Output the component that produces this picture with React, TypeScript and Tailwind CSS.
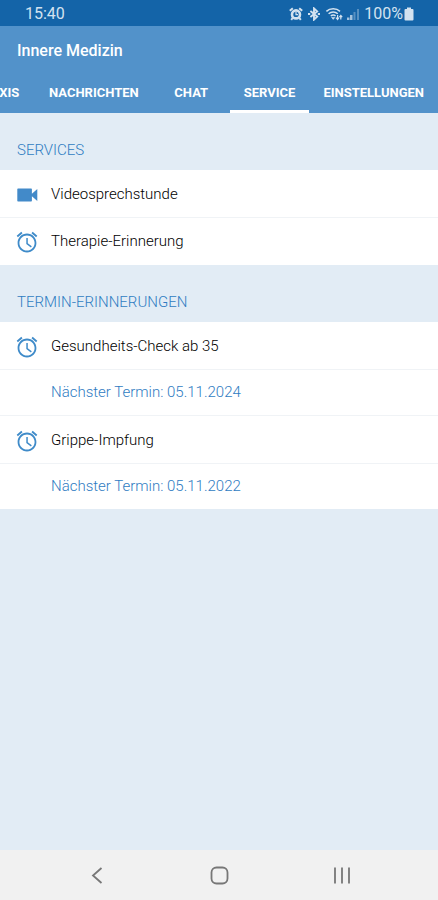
import { useState } from "react";
import clsx from "clsx";

const tabs = ["PRAXIS", "NACHRICHTEN", "CHAT", "SERVICE", "EINSTELLUNGEN"];

const reminders = [
    { name: "Gesundheits-Check ab 35", next: "05.11.2024" },
    { name: "Grippe-Impfung", next: "05.11.2022" },
];

function AlarmIcon() {
    return (
        <svg viewBox="0 0 24 24" className="size-6 shrink-0" fill="#3f8bc9" aria-hidden="true">
            <path d="M22.300 5.720l-4.600-3.860-1.200 1.500 4.600 3.860zM7.500 3.360L6.300 1.860 1.700 5.710l1.200 1.510zM11.300 8v6l4.600 3.400.9-1.200-4-3V8zM12 3.600c-5.200 0-9.400 4.200-9.400 9.400s4.200 9.400 9.400 9.400 9.400-4.200 9.400-9.400-4.200-9.400-9.400-9.400zm0 17c-4.200 0-7.600-3.400-7.600-7.600s3.400-7.600 7.600-7.600 7.600 3.400 7.600 7.600-3.400 7.600-7.600 7.600z" />
        </svg>
    );
}

function VideoIcon() {
    return (
        <svg viewBox="0 0 24 24" className="size-6 shrink-0" fill="#428ac9" aria-hidden="true">
            <path d="M3 5.500h13.200a.7.7 0 0 1 .7.7v4.500l5.400-4.700v12l-5.400-4.700v4.500a.7.7 0 0 1-.7.7H3a.7.7 0 0 1-.7-.7V6.200a.7.7 0 0 1 .7-.7z" />
        </svg>
    );
}

function StatusBar() {
    return (
        <div className="flex h-[26px] items-center justify-between bg-[#1464a8] pt-0.5 pr-6 pl-[25px] text-[#d3e2f0]">
            <span className="text-base leading-6">15:40</span>
            <div className="flex items-center gap-1">
                <svg viewBox="0 0 14 14" className="size-[14px]" fill="none" stroke="currentColor" aria-hidden="true">
                    <circle cx="7" cy="7.4" r="4" strokeWidth="2.6" />
                    <path d="M.8 3.800L3.800 1.200M13.200 3.800L10.200 1.200M3.600 11L2.200 12.800M10.400 11L11.800 12.800" strokeWidth="2" />
                    <path d="M7 5v2.600h2" strokeWidth="1.200" />
                </svg>
                <svg viewBox="0 0 14 14" className="size-[14px]" fill="none" stroke="currentColor" aria-hidden="true">
                    <path d="M3.400 4L10.200 9.600L7 12.600V1.400L10.200 4.400L3.400 10" strokeWidth="1.900" />
                    <path d="M1 7h2.200M10.800 7H13" strokeWidth="1.900" />
                </svg>
                <svg viewBox="0 0 18 14" className="h-[14px] w-[18px]" fill="none" stroke="currentColor" aria-hidden="true">
                    <path d="M1.400 4.400C5 .8 11.400 .8 15 4.400M3.600 6.800C6.200 4.400 10.200 4.400 12.800 6.800M5.800 9C7.200 7.800 9.200 7.800 10.600 9" strokeWidth="1.500" />
                    <path d="M8.200 12.400L6.600 10.400H9.800z" fill="currentColor" strokeWidth=".6" />
                    <path d="M12.600 8v4.200M11 10.600l1.600 1.800 1.200-1.800M15.800 12.600V8.600M14.400 10.200l1.400-1.800L17.200 10.200" strokeWidth="1.200" />
                </svg>
                <svg viewBox="0 0 12 14" className="h-[14px] w-3" fill="currentColor" aria-hidden="true">
                    <path d="M0 10.500h2.500V13H0zM3 8h2.500v5H3z" opacity=".75" />
                    <path d="M6.500 5h2v8h-2zM10 2h2v11h-2z" opacity=".35" />
                </svg>
                <div className="flex items-center gap-px pl-px">
                    <span className="text-base leading-6">100%</span>
                    <svg viewBox="0 0 10 14" className="h-[14px] w-[10px]" fill="currentColor" aria-hidden="true">
                        <path d="M3 .5h4V2h1.500a1 1 0 0 1 1 1v9.500a1 1 0 0 1-1 1h-7a1 1 0 0 1-1-1V3a1 1 0 0 1 1-1H3z" />
                    </svg>
                </div>
            </div>
        </div>
    );
}

function SectionTitle({ children }: { children: string }) {
    return <h2 className="px-[17px] pt-[27px] pb-[10px] text-[15px] leading-5 font-light text-[#2f7cc2]">{children}</h2>;
}

function App() {
    const [active, setActive] = useState("SERVICE");

    return (
        <div className="flex min-h-screen flex-col bg-[#e2ecf5] font-[Roboto,sans-serif]">
            <StatusBar />

            <header className="bg-[#5292ca] text-white">
                <h1 className="px-[17px] pt-[13px] pb-[9px] text-base leading-6 font-medium">Innere Medizin</h1>
                <nav className="flex h-[41px] justify-end overflow-hidden">
                    {tabs.map((tab) => (
                        <button
                            key={tab}
                            type="button"
                            onClick={() => setActive(tab)}
                            className={clsx(
                                "min-w-[77px] shrink-0 border-b-3 px-3.5 pt-1 text-[13px] font-bold",
                                active === tab ? "border-white" : "border-transparent"
                            )}
                        >
                            {tab}
                        </button>
                    ))}
                </nav>
            </header>

            <main className="grow">
                <section>
                    <SectionTitle>SERVICES</SectionTitle>
                    <div className="divide-y divide-[#f0f3f6] bg-white text-[15px] font-light text-black">
                        <button type="button" className="flex h-12 w-full items-center gap-3 px-[15px] pt-0.5">
                            <VideoIcon />
                            Videosprechstunde
                        </button>
                        <button type="button" className="flex h-[47px] w-full items-center gap-3 px-[15px]">
                            <AlarmIcon />
                            Therapie-Erinnerung
                        </button>
                    </div>
                </section>

                <section>
                    <SectionTitle>TERMIN-ERINNERUNGEN</SectionTitle>
                    <div className="divide-y divide-[#f0f3f6] bg-white text-[15px] font-light text-black">
                        {reminders.map((r) => (
                            <div key={r.name} className="divide-y divide-[#f0f3f6]">
                                <button type="button" className="flex h-12 w-full items-center gap-3 px-[15px] pt-0.5">
                                    <AlarmIcon />
                                    {r.name}
                                </button>
                                <p className="flex h-[45px] items-center pl-[51px] text-[#2f7cc2]">Nächster Termin: {r.next}</p>
                            </div>
                        ))}
                    </div>
                </section>
            </main>

            <footer className="flex h-[50px] bg-[#f1f1f1] px-9 text-[#777777]">
                <button type="button" aria-label="Zurück" className="flex flex-1 items-center justify-center">
                    <svg viewBox="0 0 20 20" className="size-5" fill="none" stroke="currentColor" strokeWidth="1.800">
                        <path d="M14.500 3L6 10.500L14.500 18" />
                    </svg>
                </button>
                <button type="button" aria-label="Startseite" className="flex flex-1 items-center justify-center">
                    <svg viewBox="0 0 20 20" className="size-5" fill="none" stroke="currentColor" strokeWidth="1.800">
                        <rect x="2.500" y="2.500" width="16" height="16" rx="5" />
                    </svg>
                </button>
                <button type="button" aria-label="Letzte Apps" className="flex flex-1 items-center justify-center">
                    <svg viewBox="0 0 20 20" className="size-5" fill="none" stroke="currentColor" strokeWidth="1.800">
                        <path d="M4 2.500v16M11 2.500v16M18 2.500v16" />
                    </svg>
                </button>
            </footer>
        </div>
    );
}

export default App;
